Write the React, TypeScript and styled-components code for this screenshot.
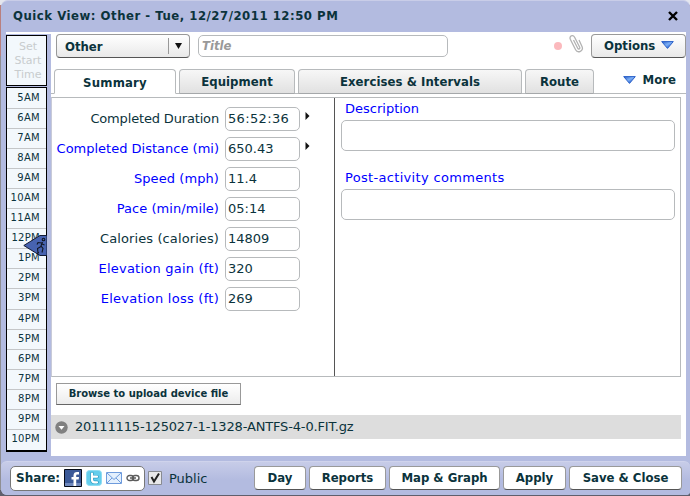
import * as React from 'react';
import styled, { createGlobalStyle } from 'styled-components';

const GlobalStyle = createGlobalStyle`
    *{
        box-sizing: border-box;
    }
    body{
        margin: 0;
        overflow: hidden;
        font-family: "DejaVu Sans", Verdana, sans-serif;
        font-size: 13px;
        color: #0b333c;
    }
    button, input, textarea{
        font: inherit;
        color: inherit;
        margin: 0;
    }
`;

const condensed = '"DejaVu Sans Condensed", "DejaVu Sans", Tahoma, sans-serif';

const Page = styled.div`
    width: 690px;
    height: 496px;
    padding: 0 0 1px 1px;
    background: linear-gradient(#e4e6ee 0 5px, #b9807f 5px 56px, #8f8f93 56px 490px, #5f5f6c 490px);
`;

const Dialog = styled.div`
    height: 495px;
    display: flex;
    flex-direction: column;
    background: #b3bbe0;
    border-top: 1px solid #c9cde8;
    border-radius: 7px 7px 4px 6px;
    overflow: hidden;
`;

const TitleBar = styled.header`
    height: 31px;
    flex: none;
    display: flex;
    justify-content: space-between;
    align-items: center;
    padding: 0 12px 2px 12px;
    font-family: ${condensed};
    font-weight: bold;
    white-space: nowrap;
`;

const Body = styled.div`
    height: 424px;
    flex: none;
    display: flex;
    padding: 0 4px 0 5px;
`;

const Timeline = styled.aside`
    width: 45px;
    flex: none;
    padding-top: 3px;
    background: linear-gradient(#fff 0 2px, transparent 2px);
    position: relative;
    font-size: 10px;
`;

const StartTime = styled.div`
    width: 41px;
    height: 51px;
    padding: 4px 0 0 3px;
    border: 1px solid #000;
    background: #f3f8fc;
    color: #c8ccce;
    font-size: 11px;
    line-height: 14px;
    text-align: center;
`;

const Hours = styled.div`
    width: 41px;
    height: 365px;
    margin-top: 1px;
    padding-top: 1px;
    border: 1px solid #000;
    border-bottom-width: 2px;
    background: #f3f8fc;
    display: grid;
    grid-template-rows: repeat(17, 20.06px) 1fr;
`;

const Hour = styled.div`
    padding-right: 6px;
    border-bottom: 1px solid #c4c6c8;
    line-height: 18px;
    letter-spacing: 0.3px;
    text-align: right;
    white-space: nowrap;

    &:last-child{
        border-bottom: 0;
    }
`;

const Marker = styled.svg`
    position: absolute;
    left: 17px;
    top: 203px;
`;

const Content = styled.main`
    width: 635px;
    background: #fff;
`;

const TopRow = styled.div`
    height: 37px;
    display: flex;
    align-items: flex-start;
    padding: 2px 0 0 5px;
`;

const SelectBox = styled.button`
    width: 134px;
    height: 24px;
    padding: 0 7px 0 8px;
    display: flex;
    align-items: center;
    border: 1px solid #999;
    border-bottom-color: #555;
    border-radius: 4px;
    background: linear-gradient(#fff, #e9e9e9);
    font-family: ${condensed};
    font-weight: bold;
    text-align: left;

    span{
        flex: 1;
    }
    i{
        width: 1px;
        height: 16px;
        margin-right: 6px;
        background: #999;
    }
`;

const TitleInput = styled.input`
    width: 250px;
    height: 22px;
    margin: 1px 0 0 8px;
    padding: 0 3px 2px;
    border: 1px solid #b7babc;
    border-radius: 5px;
    font-family: ${condensed};

    &::placeholder{
        color: #999;
        opacity: 1;
        font-weight: bold;
        font-style: italic;
    }
`;

const Dot = styled.span`
    width: 8px;
    height: 8px;
    margin: 8px 7px 0 106px;
    border-radius: 50%;
    background: #fbb9bd;
`;

const OptionsButton = styled.button`
    width: 95px;
    height: 24px;
    margin-left: auto;
    padding: 0 11px 2px 12px;
    display: flex;
    align-items: center;
    justify-content: space-between;
    border: 1px solid #999;
    border-bottom-color: #555;
    border-radius: 4px;
    background: linear-gradient(#fff, #e9e9e9);
    font-family: ${condensed};
    font-weight: bold;
`;

const Tabs = styled.nav`
    height: 25px;
    display: flex;
    gap: 3px;
    padding-left: 3px;
    background: linear-gradient(#b7babc, #b7babc) bottom / 100% 1px no-repeat;
    font-family: ${condensed};
    font-weight: bold;
`;

const Tab = styled.button<{ $width: number; $active?: boolean }>`
    width: ${p => p.$width}px;
    height: 25px;
    padding: ${p => p.$active ? '1px 0 0' : '0 0 1px'};
    border: 1px solid #b7babc;
    border-bottom-color: ${p => p.$active ? '#fff' : '#a5a8aa'};
    border-radius: 4px 4px 0 0;
    background: ${p => p.$active ? '#fff' : 'linear-gradient(#f7f7f7, #e1e1e1)'};
    font-weight: bold;
    letter-spacing: ${p => p.$active ? 0.2 : 0.06}px;
    white-space: nowrap;
`;

const More = styled.div`
    flex: 1;
    display: flex;
    align-items: center;
    justify-content: flex-end;
    gap: 7px;
    padding: 0 10px 4px 0;
`;

const Panel = styled.section`
    width: 630px;
    height: 280px;
    margin-top: 3px;
    display: flex;
    border: 1px solid #b7babc;
    border-left-color: #c8cad8;
`;

const Stats = styled.div`
    width: 283px;
    padding-top: 9px;
    border-right: 1px solid #555;
`;

const Stat = styled.label<{ $link?: boolean; $spacing?: number; $valueSpacing?: number }>`
    height: 24px;
    margin-bottom: 6px;
    display: flex;
    color: ${p => p.$link ? '#00f' : 'inherit'};

    span{
        width: 167px;
        padding-top: 4px;
        letter-spacing: ${p => p.$spacing || 0}px;
        line-height: 15px;
        text-align: right;
        white-space: nowrap;
    }
    input{
        width: 75px;
        height: 24px;
        margin: 0 5px 0 6px;
        padding: 0 2px 1px;
        border: 1px solid #b7babc;
        border-radius: 5px;
        color: #0b333c;
        letter-spacing: ${p => p.$valueSpacing || 0}px;
    }
    svg{
        margin-top: 5px;
    }
`;

const Notes = styled.div`
    flex: 1;
    padding: 3px 5px 0 6px;
`;

const Note = styled.label<{ $spacing?: number }>`
    height: 69px;
    display: block;
    color: #00f;
    line-height: 15px;

    span{
        padding-left: 4px;
        letter-spacing: ${p => p.$spacing || 0}px;
    }
    textarea{
        display: block;
        width: 334px;
        height: 31px;
        margin-top: 4px;
        border: 1px solid #b7babc;
        border-radius: 5px;
        resize: none;
    }
`;

const Browse = styled.button`
    width: 185px;
    height: 22px;
    margin: 6px 0 10px 5px;
    padding: 0 0 1px;
    display: block;
    border: 1px solid #999;
    border-bottom-color: #666;
    background: linear-gradient(#fff, #ececec);
    font-size: 10px;
    font-weight: bold;
    white-space: nowrap;
`;

const FileRow = styled.div`
    width: 630px;
    height: 24px;
    padding: 0 4px;
    display: flex;
    align-items: center;
    gap: 7px;
    background: #ddd;
    letter-spacing: -0.16px;

    span{
        padding-bottom: 1px;
    }
`;

const Footer = styled.footer`
    height: 34px;
    margin-top: 5px;
    padding: 5px 8px 0 9px;
    display: flex;
    gap: 3px;
    background: linear-gradient(#c7cce8, #b3bbe0 55%);
    border-radius: 6px 6px 0 0;
    border-top: 1px solid #cfd3ec;
`;

const Share = styled.div`
    width: 135px;
    height: 25px;
    flex: none;
    margin-top: -1px;
    padding: 0 4px 1px 5px;
    display: flex;
    align-items: center;
    border: 1px solid #777;
    border-radius: 5px;
    background: #fff;
    font-size: 12px;
    font-weight: bold;

    span{
        flex: 1;
    }
    svg + svg{
        margin-left: 4px;
    }
`;

const Public = styled.label`
    width: 103px;
    height: 22px;
    flex: none;
    display: flex;
    align-items: center;
    gap: 7px;
`;

const FooterButton = styled.button<{ $width: number }>`
    width: ${p => p.$width}px;
    height: 24px;
    flex: none;
    margin-top: -1px;
    padding: 0 0 1px;
    border: 1px solid #999;
    border-bottom-color: #555;
    border-radius: 4px;
    background: #fff;
    font-family: ${condensed};
    font-weight: bold;
    white-space: nowrap;
`;

const TitleText = styled.span`
    letter-spacing: 0.52px;
`;

const hours = ['5AM', '6AM', '7AM', '8AM', '9AM', '10AM', '11AM', '12PM', '1PM', '2PM', '3PM', '4PM', '5PM', '6PM', '7PM', '8PM', '9PM', '10PM'];

const stats = [
    { label: 'Completed Duration', value: '56:52:36', arrow: true, spacing: -0.16, valueSpacing: 0.35 },
    { label: 'Completed Distance (mi)', value: '650.43', link: true, arrow: true },
    { label: 'Speed (mph)', value: '11.4', link: true, spacing: 0.08 },
    { label: 'Pace (min/mile)', value: '05:14', link: true, spacing: 0.06 },
    { label: 'Calories (calories)', value: '14809', spacing: 0.1 },
    { label: 'Elevation gain (ft)', value: '320', link: true, spacing: 0.22 },
    { label: 'Elevation loss (ft)', value: '269', link: true, spacing: 0.26 },
];

const tabs = [
    { label: 'Summary', width: 122 },
    { label: 'Equipment', width: 116 },
    { label: 'Exercises & Intervals', width: 224 },
    { label: 'Route', width: 69 },
];

const actions = [
    { label: 'Day', width: 52 },
    { label: 'Reports', width: 77 },
    { label: 'Map & Graph', width: 111 },
    { label: 'Apply', width: 63 },
    { label: 'Save & Close', width: 113 },
];

function BlueArrow() {
    return (
        <svg width="13" height="8" viewBox="0 0 13 8">
            <defs>
                <linearGradient id="blueArrow" x2="1" y2="1">
                    <stop offset="0" stopColor="#2559c4" />
                    <stop offset=".45" stopColor="#7db0f5" />
                    <stop offset=".8" stopColor="#2a62cf" />
                </linearGradient>
            </defs>
            <path d="M.7.6h11.600L6.500 7.400z" fill="url(#blueArrow)" stroke="#2b60c8" strokeWidth="1" />
        </svg>
    );
}

function App() {
    const [active, setActive] = React.useState('Summary');
    const [isPublic, setIsPublic] = React.useState(true);

    return (
        <Page>
            <GlobalStyle />
            <Dialog>
                <TitleBar>
                    <TitleText>Quick View: Other - Tue, 12/27/2011 12:50 PM</TitleText>
                    <svg width="10" height="10" viewBox="0 0 10 10">
                        <path d="M1 1l8 8M9 1L1 9" stroke="#000" strokeWidth="2.4" />
                    </svg>
                </TitleBar>
                <Body>
                    <Timeline>
                        <StartTime>Set<br />Start<br />Time</StartTime>
                        <Hours>
                            {hours.map(hour => <Hour key={hour}>{hour}</Hour>)}
                        </Hours>
                        <Marker width="24" height="21" viewBox="0 0 24 21">
                            <path d="M24 .5H17L.8 10.500 17 20.500h7z" fill="#4763b0" stroke="#111a33" />
                            <g fill="none" stroke="#101522" strokeWidth="1.1">
                                <path d="M19.500 7l-1.500 4 2 2.500-1 4M19 8l-4-.5-1 2M19 9l2.500 1M18 11.500l-3.500 2 .5 4M14 18.500l2-1" />
                                <circle cx="20.500" cy="4.500" r="1.300" />
                            </g>
                        </Marker>
                    </Timeline>
                    <Content>
                        <TopRow>
                            <SelectBox>
                                <span>Other</span>
                                <i />
                                <svg width="7" height="6" viewBox="0 0 7 6"><path d="M0 0h7L3.500 6z" fill="#111" /></svg>
                            </SelectBox>
                            <TitleInput placeholder="Title" />
                            <Dot />
                            <svg width="15" height="20" viewBox="0 0 15 20" fill="none" stroke="#b2b2b2" strokeWidth="1.3">
                                <path d="M4.500 6l4.200 8.200c.8 1.500 2.800.6 2-1L5.600 3.300C4 .2-.2 2 1.300 5.300l5.300 10.400c2 4 8.500 1.300 6.500-3L10 6" />
                            </svg>
                            <OptionsButton>Options<BlueArrow /></OptionsButton>
                        </TopRow>
                        <Tabs>
                            {tabs.map(tab => (
                                <Tab key={tab.label} $width={tab.width} $active={tab.label === active} onClick={() => setActive(tab.label)}>
                                    {tab.label}
                                </Tab>
                            ))}
                            <More><BlueArrow />More</More>
                        </Tabs>
                        <Panel>
                            <Stats>
                                {stats.map(stat => (
                                    <Stat key={stat.label} $link={stat.link} $spacing={stat.spacing} $valueSpacing={stat.valueSpacing}>
                                        <span>{stat.label}</span>
                                        <input defaultValue={stat.value} />
                                        {stat.arrow && <svg width="5" height="8" viewBox="0 0 5 8"><path d="M.5 0v8l4-4z" fill="#111" /></svg>}
                                    </Stat>
                                ))}
                            </Stats>
                            <Notes>
                                <Note><span>Description</span><textarea /></Note>
                                <Note $spacing={0.32}><span>Post-activity comments</span><textarea /></Note>
                            </Notes>
                        </Panel>
                        <Browse>Browse to upload device file</Browse>
                        <FileRow>
                            <svg width="13" height="13" viewBox="0 0 13 13">
                                <circle cx="6.500" cy="6.500" r="6.200" fill="#808080" />
                                <path d="M3.500 5h6l-3 3.800z" fill="#fff" />
                            </svg>
                            <span>20111115-125027-1-1328-ANTFS-4-0.FIT.gz</span>
                        </FileRow>
                    </Content>
                </Body>
                <Footer>
                    <Share>
                        <span>Share:</span>
                        <svg width="18" height="18" viewBox="0 0 18 18">
                            <path d="M.5.5h17v17H.5z" fill="#3b5998" stroke="#050a18" />
                            <path d="M1 14h16v3H1z" fill="#6f88bd" />
                            <path d="M9.500 17V10.500H7.500V8h2V6.500C9.500 4 11 3 13 3h2v2.500h-1.500c-1 0-1.300.4-1.300 1.300V8H15l-.3 2.500h-2.500V17z" fill="#fff" />
                        </svg>
                        <svg width="16" height="16" viewBox="0 0 16 16">
                            <rect x=".5" y=".5" width="15" height="15" rx="3" fill="#63cdec" stroke="#8edcf2" />
                            <path d="M6 3.500v6c0 2 1 2.800 2.700 2.800h2.300M6 6.700h5" fill="none" stroke="#2a9cc4" strokeWidth="3.600" strokeLinecap="round" />
                            <path d="M6 3.500v6c0 2 1 2.800 2.700 2.800h2.300M6 6.700h5" fill="none" stroke="#fff" strokeWidth="2.200" strokeLinecap="round" />
                        </svg>
                        <svg width="16" height="12" viewBox="0 0 16 12" fill="none" stroke="#6e9bdc">
                            <path d="M.5.5h15v11H.5z" fill="#e4f0fd" />
                            <path d="M1 1l7 6.500L15 1M1 11l5-5M15 11l-5-5" />
                        </svg>
                        <svg width="14" height="8" viewBox="0 0 14 8" fill="none" stroke="#5c5c5c" strokeWidth="1.400">
                            <rect x="1" y="1.500" width="6.500" height="5" rx="2.500" />
                            <rect x="6.500" y="1.500" width="6.500" height="5" rx="2.500" />
                            <path d="M4 4h6" />
                        </svg>
                    </Share>
                    <Public onClick={() => setIsPublic(!isPublic)}>
                        <svg width="14" height="14" viewBox="0 0 14 14">
                            <path d="M.5.5h13v13H.5z" fill="#e8e8ea" stroke="#888b91" />
                            {isPublic && <path d="M3.500 6l2.500 4.500L11 2.500" fill="none" stroke="#222" strokeWidth="2" />}
                        </svg>
                        <span>Public</span>
                    </Public>
                    {actions.map(action => (
                        <FooterButton key={action.label} $width={action.width}>{action.label}</FooterButton>
                    ))}
                </Footer>
            </Dialog>
        </Page>
    );
}

export default App;
